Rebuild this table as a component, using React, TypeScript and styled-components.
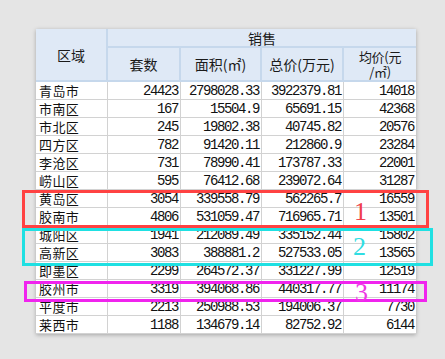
import React from "react";
import styled, { createGlobalStyle } from "styled-components";

const GlobalStyle = createGlobalStyle`
  html, body {
    margin: 0;
    padding: 0;
    background: #e5e5e5;
  }
`;

// Styled components
const Page = styled.div`
  position: relative;
  box-sizing: border-box;
  width: 445px;
  height: 359px;
  padding: 29px 0 0 36px;
  overflow: hidden;
  font-family: "Noto Sans CJK SC", "Liberation Sans", sans-serif;
  color: #111;
`;

const Sheet = styled.div`
  display: grid;
  grid-template-columns: 72px 73px 81px 82px 72px;
  grid-template-rows: 19px 34px repeat(14, 18px);
  width: 380px;
  background: #fff;
  box-shadow: 0 1px 4px rgba(0, 0, 0, 0.28);
`;

const HeadCell = styled.div<{ $last?: boolean; $small?: boolean }>`
  box-sizing: border-box;
  display: flex;
  flex-direction: column;
  align-items: center;
  justify-content: center;
  background: #dfe9f6;
  border-right: ${(p) => (p.$last ? "none" : "2px solid #c6d8ec")};
  border-bottom: 2px solid #c6d8ec;
  font-size: ${(p) => (p.$small ? "13px" : "14px")};
  line-height: ${(p) => (p.$small ? "15px" : "16px")};
  letter-spacing: ${(p) => (p.$small ? "-0.3px" : "0")};
  color: #1a1a1a;
  text-align: center;
  white-space: nowrap;
`;

const AreaHead = styled(HeadCell)`
  grid-column: 1;
  grid-row: 1 / span 2;
`;

const GroupHead = styled(HeadCell)`
  grid-column: 2 / 6;
  grid-row: 1;
`;

const Cell = styled.div<{ $num?: boolean; $last?: boolean }>`
  box-sizing: border-box;
  display: flex;
  align-items: center;
  justify-content: ${(p) => (p.$num ? "flex-end" : "flex-start")};
  padding: ${(p) => (p.$num ? "0 2px 0 0" : "0 0 0 3px")};
  border-right: ${(p) => (p.$last ? "none" : "1px solid #d2d2d2")};
  border-bottom: 1px solid #d2d2d2;
  font-family: ${(p) =>
    p.$num ? '"Liberation Mono", monospace' : '"Noto Sans CJK SC", sans-serif'};
  font-size: ${(p) => (p.$num ? "14px" : "13px")};
  letter-spacing: ${(p) => (p.$num ? "-1.4px" : "0.4px")};
  white-space: nowrap;
`;

const Mark = styled.div<{ $color: string }>`
  position: absolute;
  box-sizing: border-box;
  border: 3px solid ${(p) => p.$color};
`;

const Tag = styled.span<{ $color: string }>`
  position: absolute;
  font-family: "Liberation Serif", serif;
  font-size: 26px;
  line-height: 1;
  color: ${(p) => p.$color};
`;

type Row = [string, string, string, string, string];

const rows: Row[] = [
  ["青岛市", "24423", "2798028.33", "3922379.81", "14018"],
  ["市南区", "167", "15504.9", "65691.15", "42368"],
  ["市北区", "245", "19802.38", "40745.82", "20576"],
  ["四方区", "782", "91420.11", "212860.9", "23284"],
  ["李沧区", "731", "78990.41", "173787.33", "22001"],
  ["崂山区", "595", "76412.68", "239072.64", "31287"],
  ["黄岛区", "3054", "339558.79", "562265.7", "16559"],
  ["胶南市", "4806", "531059.47", "716965.71", "13501"],
  ["城阳区", "1941", "212089.49", "335152.44", "15802"],
  ["高新区", "3083", "388881.2", "527533.05", "13565"],
  ["即墨区", "2299", "264572.37", "331227.99", "12519"],
  ["胶州市", "3319", "394068.86", "440317.77", "11174"],
  ["平度市", "2213", "250988.53", "194006.37", "7730"],
  ["莱西市", "1188", "134679.14", "82752.92", "6144"],
];

// highlight boxes drawn over the sheet
const marks = [
  { color: "#ff4242", left: 22, top: 190, width: 407, height: 38 },
  { color: "#1fe0e2", left: 22, top: 228, width: 411, height: 38 },
  { color: "#f024ee", left: 24, top: 281, width: 403, height: 21 },
];

const tags = [
  { text: "1", color: "#f0404c", left: 354, top: 199 },
  { text: "2", color: "#30dde2", left: 353, top: 234 },
  { text: "3", color: "#ee38e4", left: 355, top: 280 },
];

const App: React.FC = () => {
  return (
    <Page>
      <GlobalStyle />
      <Sheet>
        <AreaHead>区域</AreaHead>
        <GroupHead $last>销售</GroupHead>
        <HeadCell>套数</HeadCell>
        <HeadCell>面积(㎡)</HeadCell>
        <HeadCell>总价(万元)</HeadCell>
        <HeadCell $last $small>
          <span>均价(元</span>
          <span>/㎡)</span>
        </HeadCell>
        {rows.map((row) =>
          row.map((value, i) => (
            <Cell key={row[0] + i} $num={i > 0} $last={i === 4}>
              {value}
            </Cell>
          ))
        )}
      </Sheet>
      {marks.map((m) => (
        <Mark
          key={m.color}
          $color={m.color}
          style={{ left: m.left, top: m.top, width: m.width, height: m.height }}
        />
      ))}
      {tags.map((t) => (
        <Tag key={t.text} $color={t.color} style={{ left: t.left, top: t.top }}>
          {t.text}
        </Tag>
      ))}
    </Page>
  );
};

export default App;
